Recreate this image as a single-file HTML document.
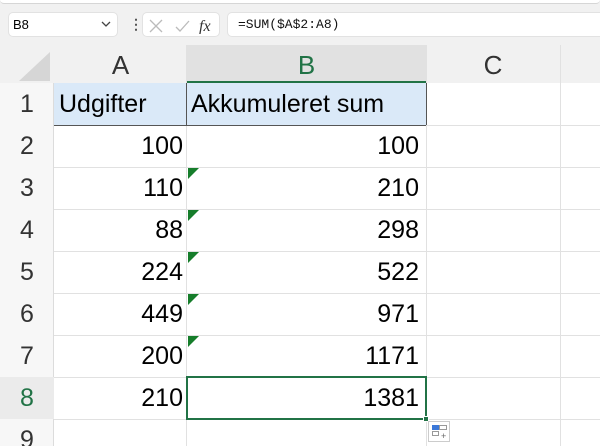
<!DOCTYPE html><html><head><style>
*{margin:0;padding:0;box-sizing:border-box}
html,body{width:600px;height:446px;overflow:hidden}
body{background:#f1f1f1;font-family:"Liberation Sans",sans-serif;position:relative}
.a{position:absolute}
.top{left:0;top:0;width:600px;height:4px;background:#fff;border-bottom:1px solid #d6d6d6;border-radius:0 0 6px 6px}
.box{background:#fff;border:1px solid #e2e2e2;border-radius:5px}
.grid{left:0;top:83px;width:600px;height:363px;background:#fff}
.hl{height:1px;background:#e1e1e1;left:54px;width:546px}
.vl{width:1px;background:#e1e1e1;top:45px;height:401px}
.rn{left:0;width:54px;text-align:center;font-size:25px;color:#333;height:42px;line-height:42px}
.cell{font-size:25px;color:#000;height:42px;line-height:42px}
.tri{width:0;height:0;border-top:11px solid #167d2b;border-right:11px solid transparent;left:188px}
</style></head><body>
<div class="a top"></div>
<div class="a box" style="left:8px;top:12px;width:110px;height:25px;font-size:13px;line-height:23px;padding-left:4px">B8<svg class="a" style="right:6px;top:8px" width="10" height="7"><path d="M1 1l4 4 4-4" stroke="#444" stroke-width="1.3" fill="none"/></svg></div>
<div class="a" style="left:129px;top:15px;width:3px;height:18px;font-size:14px;line-height:18px;color:#555;font-weight:bold">&#8942;</div>
<div class="box a" style="left:142px;top:12px;width:78px;height:25px">
<svg class="a" style="left:4px;top:5px" width="70" height="16"><path d="M3 2l12 12M15 2L3 14" stroke="#bbb" stroke-width="1.3" fill="none"/><path d="M29 9l4 4 9-10" stroke="#bbb" stroke-width="1.3" fill="none"/><text x="52" y="13" font-family="Liberation Serif" font-style="italic" font-size="16" fill="#333">fx</text></svg></div>
<div class="box a" style="left:227px;top:12px;width:380px;height:25px;font-family:'Liberation Mono',monospace;font-size:13px;line-height:23px;padding-left:10px;color:#111">=SUM($A$2:A8)</div>
<svg class="a" style="left:16px;top:50px" width="36" height="32"><path d="M34 2V31H3Z" fill="#d6d6d6"/></svg>
<div class="a" style="left:187px;top:45px;width:239px;height:38px;background:#e1e1e1;border-bottom:2px solid #217346"></div>
<div class="a" style="left:54px;top:45px;width:133px;height:38px;text-align:center;font-size:26px;line-height:40px;color:#333">A</div>
<div class="a" style="left:187px;top:45px;width:239px;height:38px;text-align:center;font-size:26px;line-height:40px;color:#217346">B</div>
<div class="a" style="left:426px;top:45px;width:134px;height:38px;text-align:center;font-size:26px;line-height:40px;color:#333">C</div>
<div class="a grid"></div>
<div class="a" style="left:0;top:83px;width:54px;height:363px;background:#f7f7f7;border-right:1px solid #dcdcdc"></div>
<div class="a" style="left:54px;top:83px;width:372px;height:42px;background:#dae9f8"></div>
<div class="a" style="left:0;top:377px;width:54px;height:42px;background:#ebebeb"></div>
<div class="a vl" style="left:186px"></div><div class="a vl" style="left:426px"></div><div class="a vl" style="left:560px"></div>
<div class="a hl" style="top:125px"></div><div class="a hl" style="top:167px"></div><div class="a hl" style="top:209px"></div><div class="a hl" style="top:251px"></div><div class="a hl" style="top:293px"></div><div class="a hl" style="top:335px"></div><div class="a hl" style="top:377px"></div><div class="a hl" style="top:419px"></div>
<div class="a" style="left:54px;top:125px;width:372px;height:1px;background:#555"></div>
<div class="a" style="left:186px;top:83px;width:1px;height:42px;background:#555"></div>
<div class="a" style="left:426px;top:83px;width:1px;height:42px;background:#555"></div>
<div class="a rn" style="top:83px">1</div><div class="a rn" style="top:125px">2</div><div class="a rn" style="top:167px">3</div><div class="a rn" style="top:209px">4</div><div class="a rn" style="top:251px">5</div><div class="a rn" style="top:293px">6</div><div class="a rn" style="top:335px">7</div><div class="a rn" style="top:377px;color:#217346">8</div><div class="a rn" style="top:419px">9</div>
<div class="a cell" style="left:59px;top:83px">Udgifter</div>
<div class="a cell" style="left:191px;top:83px">Akkumuleret sum</div>
<div class="a cell" style="left:54px;width:129px;text-align:right;top:125px">100</div>
<div class="a cell" style="left:54px;width:129px;text-align:right;top:167px">110</div>
<div class="a cell" style="left:54px;width:129px;text-align:right;top:209px">88</div>
<div class="a cell" style="left:54px;width:129px;text-align:right;top:251px">224</div>
<div class="a cell" style="left:54px;width:129px;text-align:right;top:293px">449</div>
<div class="a cell" style="left:54px;width:129px;text-align:right;top:335px">200</div>
<div class="a cell" style="left:54px;width:129px;text-align:right;top:377px">210</div>
<div class="a cell" style="left:187px;width:232px;text-align:right;top:125px">100</div>
<div class="a cell" style="left:187px;width:232px;text-align:right;top:167px">210</div>
<div class="a cell" style="left:187px;width:232px;text-align:right;top:209px">298</div>
<div class="a cell" style="left:187px;width:232px;text-align:right;top:251px">522</div>
<div class="a cell" style="left:187px;width:232px;text-align:right;top:293px">971</div>
<div class="a cell" style="left:187px;width:232px;text-align:right;top:335px">1171</div>
<div class="a cell" style="left:187px;width:232px;text-align:right;top:377px">1381</div>
<div class="a tri" style="top:168px"></div><div class="a tri" style="top:210px"></div><div class="a tri" style="top:252px"></div><div class="a tri" style="top:294px"></div><div class="a tri" style="top:336px"></div>
<div class="a" style="left:186px;top:376px;width:241px;height:44px;border:2px solid #217346"></div>
<div class="a" style="left:423px;top:416px;width:6px;height:6px;background:#217346;border:1px solid #fff"></div>
<div class="a" style="left:428px;top:421px;width:22px;height:21px;border:1px solid #ccc;background:#fff">
<div class="a" style="left:3px;top:3px;width:7px;height:5px;background:#3b78d8"></div>
<div class="a" style="left:10px;top:3px;width:8px;height:5px;border:1px solid #999"></div>
<div class="a" style="left:3px;top:9px;width:7px;height:5px;border:1px solid #999"></div>
<div class="a" style="left:12px;top:9px;font-size:9px;color:#666">+</div></div>
</body></html>
